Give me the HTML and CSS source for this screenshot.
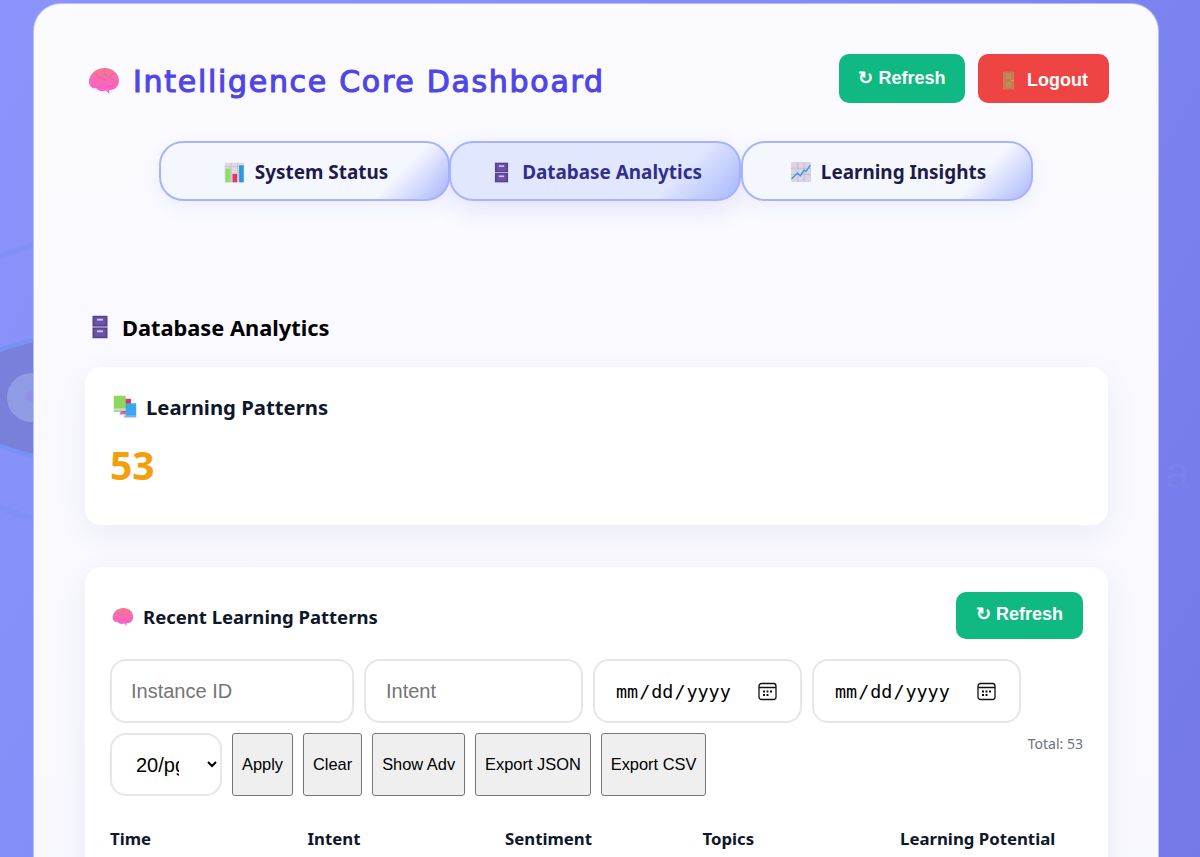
FILE: index.html
```html
<!DOCTYPE html>
<html lang="en">
<head>
<meta charset="utf-8">
<title>Intelligence Core Dashboard</title>
<link rel="stylesheet" href="styles.css">
</head>
<body>
<svg width="0" height="0" class="defs">
  <defs>
    <linearGradient id="gBrain" x1="0" y1="0" x2="0" y2="1"><stop offset="0" stop-color="#f2798f"/><stop offset="1" stop-color="#ff5cd6"/></linearGradient>
    <symbol id="i-brain" viewBox="0 0 32 32">
      <path fill="url(#gBrain)" d="M1 17C1 9 8 3 17 3c8 0 14 6 14 13 0 5-4 9-8.500 9H21l.5 4-3.500-3.500c-4 1.500-8 .5-10-2.500-4 1-7-2.500-7-6z"/>
      <path fill="none" stroke="#dc4f9c" stroke-opacity=".6" stroke-width=".8" d="M7 8c2 1 3 3 3 5M17 3c-2 3-1 6 2 8M27 8c-3 0-5 2-5 5M10 13c3-1 6 0 7 3M22 13c2 1 5 2 6 5M8 22c3 1 6-1 7-4M17 20c3 2 6 2 8 0"/>
    </symbol>
    <symbol id="i-chart" viewBox="0 0 32 32">
      <rect x="1" y="1" width="30" height="30" rx="1.500" fill="#dedae2"/>
      <path stroke="#bcb7c5" stroke-width="1" d="M1 7h30M11 1v30M21 1v30"/>
      <rect x="2" y="10" width="8" height="21" fill="#8fdc6a"/>
      <rect x="13" y="18" width="7" height="13" fill="#e8326f"/>
      <rect x="23" y="5" width="7" height="26" fill="#2a9ae0"/>
    </symbol>
    <symbol id="i-cabinet" viewBox="0 0 32 32">
      <rect x="6" y="1" width="20" height="14.500" fill="#57438c"/>
      <rect x="6" y="16.500" width="20" height="14.500" fill="#57438c"/>
      <rect x="8.500" y="3" width="15" height="10.500" fill="#6a52a8"/>
      <rect x="8.500" y="18.500" width="15" height="10.500" fill="#6a52a8"/>
      <rect x="12" y="5" width="8" height="2.500" fill="#cfc4ea"/>
      <rect x="12" y="20.500" width="8" height="2.500" fill="#cfc4ea"/>
    </symbol>
    <symbol id="i-trend" viewBox="0 0 32 32">
      <rect x="0" y="0" width="32" height="32" rx="2" fill="#dcd4e4"/>
      <path stroke="#b8aec6" stroke-width="1" d="M0 10h32M0 20h32M11 0v32M21 0v32"/>
      <path fill="none" stroke="#2d9ae0" stroke-width="2.200" d="M1 27l9-9 5 4 6-9 3 2 7-10"/>
    </symbol>
    <symbol id="i-door" viewBox="0 0 32 32">
      <rect x="7" y="1" width="18" height="30" fill="#c8875c"/>
      <path stroke="#ad6f4a" stroke-width="1" fill="none" d="M10 3h12v12H10zM10 17h12v12H10z"/>
      <rect x="20" y="15" width="5" height="1.500" fill="#f0a030"/>
    </symbol>
    <symbol id="i-books" viewBox="0 0 32 32">
      <rect x="11" y="5" width="13" height="20" rx="1" fill="#e0306a"/>
      <rect x="9" y="23" width="15" height="3" fill="#c878b0"/>
      <rect x="17" y="11" width="14" height="18" rx="1" fill="#3aa8ee"/>
      <rect x="15" y="27" width="16" height="3" fill="#86aee6"/>
      <rect x="1" y="1" width="16" height="19" rx="1" fill="#8fd85f"/>
      <rect x="1" y="18" width="16" height="3.500" fill="#d5d9de"/>
      <rect x="1" y="21" width="16" height="1" fill="#6fa84c"/>
    </symbol>
  </defs>
</svg>
<div class="bg-rings">
  <div class="ring ring-a"></div>
  <div class="ring ring-b"></div>
  <div class="ring ring-c"></div>
  <div class="ring ring-d"></div>
</div>
<span class="bg-letter">a</span>
<main class="panel">
  <header class="top">
    <h1 class="title"><svg class="ico ico-title"><use href="#i-brain"/></svg><span>Intelligence Core Dashboard</span></h1>
    <div class="top-actions">
      <button class="btn btn-green">↻ Refresh</button>
      <button class="btn btn-red"><svg class="ico ico-door"><use href="#i-door"/></svg>Logout</button>
    </div>
  </header>
  <nav class="tabs">
    <button class="tab"><svg class="ico ico-tab"><use href="#i-chart"/></svg>System Status</button>
    <button class="tab tab-active"><svg class="ico ico-tab"><use href="#i-cabinet"/></svg>Database Analytics</button>
    <button class="tab"><svg class="ico ico-tab ico-tab-trend"><use href="#i-trend"/></svg>Learning Insights</button>
  </nav>
  <h2 class="section-title"><svg class="ico ico-h2"><use href="#i-cabinet"/></svg>Database Analytics</h2>
  <section class="card card-stat">
    <h3 class="card-title"><svg class="ico ico-h3"><use href="#i-books"/></svg>Learning Patterns</h3>
    <div class="stat">53</div>
  </section>
  <section class="card card-table">
    <div class="card-head">
      <h3 class="card-title card-title-small"><svg class="ico ico-h3s"><use href="#i-brain"/></svg>Recent Learning Patterns</h3>
      <button class="btn btn-green btn-small">↻ Refresh</button>
    </div>
    <div class="filters">
      <input class="field f-id" type="text" placeholder="Instance ID">
      <input class="field f-intent" type="text" placeholder="Intent">
      <input class="field f-date" type="date">
      <input class="field f-date" type="date">
    </div>
    <div class="actions">
      <select class="field f-page"><option>20/pg</option></select>
      <button class="plain">Apply</button>
      <button class="plain">Clear</button>
      <button class="plain">Show Adv</button>
      <button class="plain">Export JSON</button>
      <button class="plain">Export CSV</button>
      <span class="total">Total: 53</span>
    </div>
    <div class="thead">
      <span>Time</span><span>Intent</span><span>Sentiment</span><span>Topics</span><span>Learning Potential</span>
    </div>
  </section>
</main>
</body>
</html>
```
FILE: styles.css
```css
* { box-sizing: border-box; }
html, body { margin: 0; height: 857px; overflow: hidden; }
body {
  position: relative;
  background: linear-gradient(120deg, #8a94fa 0%, #818cf8 45%, #7478e8 100%);
  font-family: "Open Sans", "Noto Sans", sans-serif;
}
.defs { position: absolute; }
.bg-rings { position: absolute; inset: 0; overflow: hidden; }
.ring { position: absolute; border-radius: 50%; }
.ring-a { left: -123px; top: 224px; width: 586px; height: 316px; border: 6px solid rgba(110,140,245,.28); }
.ring-b { left: -60px; top: 323px; width: 460px; height: 150px; background: #7880dc; border: 5px solid #7a90f2; }
.ring-c { left: 7px; top: 373px; width: 49px; height: 49px; background: #8f9be2; }
.ring-d { left: 26px; top: 391px; width: 12px; height: 12px; background: #8f90ea; }
.bg-letter { position: absolute; left: 1165px; top: 451px; font: 44px/44px "Liberation Sans", sans-serif; color: rgba(255,255,255,.04); }
.panel {
  position: relative;
  width: 1126px;
  height: 1200px;
  margin: 3px 0 0 33px;
  padding: 50px 48px 0 54px;
  background: linear-gradient(180deg, #fafaff 0%, #f7f7fe 100%);
  border: 1px solid #b9bffb;
  border-radius: 28px;
}
.top { display: flex; justify-content: space-between; align-items: center; height: 49px; margin-right: 1px; }
.title { display: flex; align-items: center; gap: 13px; margin: 0; padding-top: 5px; font-family: "DejaVu Sans", sans-serif; font-size: 30px; font-weight: 400; letter-spacing: 1.700px; color: #4f46e5; -webkit-text-stroke: 1.100px #4f46e5; }
.top-actions { display: flex; gap: 13px; }
.ico { display: inline-block; flex: none; }
.ico-title { width: 32px; height: 32px; }
.btn { height: 49px; border: 0; border-radius: 10px; color: #fff; font: bold 18px "Liberation Sans", sans-serif; cursor: pointer; }
.btn-green { width: 126px; background: #10b981; padding: 0 0 1px; }
.btn-red { width: 131px; background: #ef4444; display: flex; align-items: center; justify-content: center; gap: 9px; padding: 4px 0 0; }
.ico-door { width: 19px; height: 19px; }
.tabs { display: flex; margin: 38px 0 0 71px; }
.tab {
  display: flex; align-items: center; justify-content: center; gap: 10px;
  width: 292px; height: 60px; padding: 2px 0 0 3px;
  border: 2px solid #a5b4fc; border-radius: 24px;
  background: linear-gradient(135deg, #f5f7ff 0%, #f5f7ff 78%, #aab8fb 100%);
  box-shadow: 0 6px 18px rgba(99,102,241,.08);
  color: #1e1b4b; font: 700 18.900px "Noto Sans", sans-serif; cursor: pointer;
}
.tab:first-child { width: 291px; margin-right: -1px; }
.tab-active {
  background: linear-gradient(135deg, #e0e7ff 0%, #e0e7ff 75%, #aab8fb 100%);
  box-shadow: 0 8px 24px rgba(99,102,241,.15);
  color: #312e91;
}
.ico-tab { width: 21px; height: 21px; }
.ico-tab-trend { width: 20px; height: 20px; }
.section-title { display: flex; align-items: center; gap: 10px; margin: 108px 0 0 0; height: 36px; font: 700 21.800px "Noto Sans", sans-serif; color: #000; }
.ico-h2 { width: 24px; height: 24px; }
.card { margin: 22px 0 0 -3px; width: 1023px; background: #fff; border-radius: 16px; box-shadow: 0 8px 32px rgba(30,30,80,.06); padding: 0 25px 0 25px; }
.card-stat { height: 158px; padding-top: 26px; }
.card-title { display: flex; align-items: center; gap: 9px; margin: 0; font: 700 20.300px "Noto Sans", sans-serif; color: #0f172a; }
.ico-h3 { width: 24px; height: 24px; margin-left: 3px; }
.stat { margin-top: 20px; font: 700 39px "Noto Sans", sans-serif; color: #f59e0b; line-height: 48px; }
.card-table { margin-top: 42px; height: 500px; padding-top: 25px; }
.card-head { display: flex; justify-content: space-between; align-items: center; height: 47px; }
.card-title-small { font-size: 18.500px; gap: 9px; padding-top: 2px; }
.ico-h3s { width: 22px; height: 22px; margin-left: 2px; }
.btn-small { width: 127px; height: 47px; padding-bottom: 3px; }
.filters { display: flex; gap: 10px; margin-top: 20px; }
.field { height: 64px; border: 2px solid #e5e7eb; border-radius: 16px; padding: 0 20px; background: #fff; font: 20px "Liberation Sans", sans-serif; color: #000; outline: none; }
.field::placeholder { color: #757575; }
.f-id { width: 244px; padding-left: 19px; }
.f-intent { width: 219px; }
.f-date { width: 209px; font-family: "DejaVu Sans Mono", monospace; font-size: 18.400px; }
.f-date::-webkit-calendar-picker-indicator {
  width: 19px; height: 19px; padding: 0; margin: 0 3px 0 0; opacity: 1;
  background: url("data:image/svg+xml,%3Csvg xmlns='http://www.w3.org/2000/svg' viewBox='0 0 19 19'%3E%3Crect x='1' y='1.500' width='17' height='16' rx='2.500' fill='none' stroke='%23111' stroke-width='1.300'/%3E%3Cpath d='M1 5.500h17' stroke='%23111' stroke-width='1.300'/%3E%3Cpath d='M5 8.500h2v2H5zM8.500 8.500h2v2h-2zM12 8.500h2v2h-2zM5 12h2v2H5zM8.500 12h2v2h-2z' fill='%23111'/%3E%3C/svg%3E") center/19px 19px no-repeat;
}
.actions { position: relative; display: flex; gap: 10px; margin-top: 10px; align-items: stretch; }
.f-page { width: 112px; height: 63px; padding: 0 25px 0 20px; }
.plain { padding: 0 9px; border: 1px solid #767676; border-radius: 3px; background: #efefef; font: 16.400px "Liberation Sans", sans-serif; color: #000; cursor: pointer; }
.total { margin-left: auto; padding-top: 1px; font: 14px "Noto Sans", sans-serif; color: #6b7280; }
.thead { display: grid; grid-template-columns: repeat(4, 197.500px) 1fr; margin-top: 31px; font: 700 16.800px "Noto Sans", sans-serif; color: #0f172a; }
```
